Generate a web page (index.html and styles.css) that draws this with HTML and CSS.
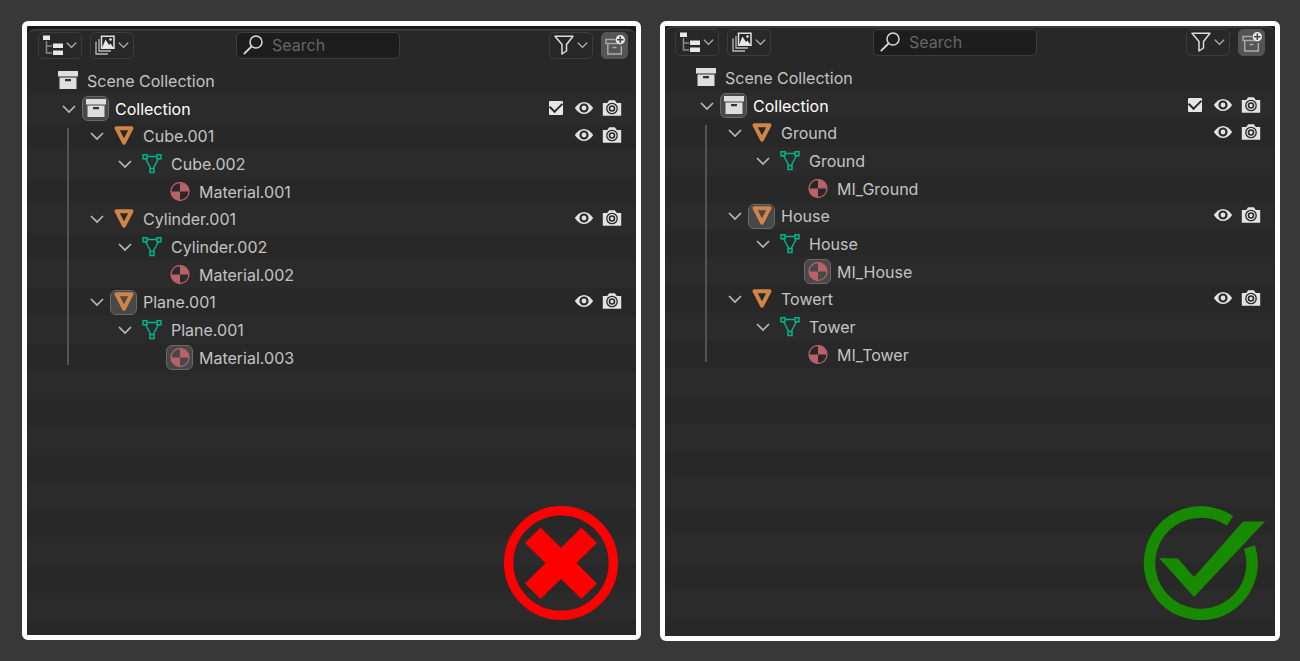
FILE: index.html
```
<!DOCTYPE html>
<html lang="en">
<head>
    <meta charset="utf-8">
    <title>Outliner naming</title>
    <link rel="stylesheet" href="styles.css">
</head>
<body>
    <svg class="sprite" aria-hidden="true">
        <symbol id="i-arrow" viewBox="0 0 14 20"><path d="M1 7l6 6 6-6" fill="none" stroke="#b8b8b8" stroke-width="1.700"/></symbol>
        <symbol id="i-box" viewBox="0 0 20 20"><path fill="#dedede" d="M0 0h20v5.500H0zM1.500 6.500h17V18h-17z"/><path fill="#333" d="M7 8h6v2.300H7z"/></symbol>
        <symbol id="i-object" viewBox="0 0 20 20"><path d="M2.500 2.200h15L10 16.700z" fill="none" stroke="#cf8549" stroke-width="4" stroke-linejoin="round"/></symbol>
        <symbol id="i-mesh" viewBox="0 0 20 20"><g fill="none" stroke="#00b48b" stroke-width="1.500"><path d="M5 2.500h10M3.500 4.500 8.500 14M16.500 4.500l-5 9.500"/><path d="M1 .8h4v4H1zM15 .8h4v4h-4zM8 14.500h4v4H8z"/></g></symbol>
        <symbol id="i-material" viewBox="0 0 20 20"><circle cx="10" cy="9.500" r="9" fill="none" stroke="#b9606a" stroke-width="1.300"/><path fill="#b9606a" d="M10 .5a9 9 0 0 1 9 9h-9zM10 18.500a9 9 0 0 1-9-9h9z"/></symbol>
        <symbol id="i-eye" viewBox="0 0 20 20"><path fill="#e2e2e2" d="M.8 9Q5 3 10 3t9.200 6q-4.200 6-9.200 6T.8 9z"/><circle cx="10" cy="9" r="3.500" fill="#e2e2e2" stroke="#2a2a2a" stroke-width="2.200"/></symbol>
        <symbol id="i-camera" viewBox="0 0 20 20"><path fill="#e2e2e2" d="M.8 4h4.400l2-2.800h5.600l2 2.800h4.400v12.800H.8z"/><circle cx="10" cy="9.500" r="5.200" fill="none" stroke="#2a2a2a" stroke-width="1.300"/><circle cx="10" cy="9.500" r="2.500" fill="none" stroke="#2a2a2a" stroke-width="1.600"/></symbol>
        <symbol id="i-tree" viewBox="0 0 20 20"><path fill="#e8e8e8" d="M0 .5h7V5H0zM10 8.500h10V13H10zM10 15.500h10V20H10z"/><path d="M3.500 6v12H9M3.500 11H9" fill="none" stroke="#8a8a8a" stroke-width="1.500"/></symbol>
        <symbol id="i-image" viewBox="0 0 20 20"><path fill="none" stroke="#e0e0e0" stroke-width="1.500" d="M6.500 1.200h12.500v12H6.500z"/><path fill="#e8e8e8" d="M7 13l3.500-8.500L14 10l1.500-1.500 3 4.500z"/><circle cx="15.500" cy="4.500" r="1.300" fill="#e8e8e8"/><path d="M4 4v12h12M1 6.500V19h12" fill="none" stroke="#bababa" stroke-width="1.300"/></symbol>
        <symbol id="i-search" viewBox="0 0 20 20"><circle cx="13" cy="7" r="6" fill="none" stroke="#d8d8d8" stroke-width="1.500"/><path d="M8.500 11.500.8 19.200" stroke="#d8d8d8" stroke-width="1.800"/></symbol>
        <symbol id="i-filter" viewBox="0 0 20 20"><path d="M1 1.200h18L12.500 9.500v6.500L8 19V9.500z" fill="none" stroke="#dcdcdc" stroke-width="1.500" stroke-linejoin="round"/></symbol>
        <symbol id="i-new" viewBox="0 0 20 20"><path d="M10 4.500H1v4h13M2.800 8.500V19h13.500v-8M7.500 12.500h4" fill="none" stroke="#a8a8a8" stroke-width="1.500"/><circle cx="15.300" cy="4.700" r="4.700" fill="#e8e8e8"/><path d="M15.300 1.500v6.400M12.100 4.700h6.400" stroke="#444" stroke-width="1.500"/></symbol>
    </svg>

    <main class="compare">
        <section class="panel panel-bad">
            <div class="editor">
                <header class="toolbar">
                    <button class="tool" aria-label="Editor type"><svg class="icon"><use href="#i-tree"/></svg><svg class="arrow"><use href="#i-arrow"/></svg></button>
                    <button class="tool" aria-label="Display mode"><svg class="icon"><use href="#i-image"/></svg><svg class="arrow"><use href="#i-arrow"/></svg></button>
                    <label class="search"><svg class="icon"><use href="#i-search"/></svg><input type="text" placeholder="Search" aria-label="Search"></label>
                    <button class="tool" aria-label="Filter"><svg class="icon"><use href="#i-filter"/></svg><svg class="arrow"><use href="#i-arrow"/></svg></button>
                    <button class="tool tool-new" aria-label="New collection"><svg class="icon"><use href="#i-new"/></svg></button>
                </header>
                <div class="tree" data-items="Cube.001,Cube.002,Material.001;Cylinder.001,Cylinder.002,Material.002;Plane.001*,Plane.001,Material.003*"></div>
            </div>
            <svg class="mark" viewBox="0 0 114 114" role="img" aria-label="Wrong">
                <circle cx="57" cy="57" r="52.300" fill="none" stroke="#f00" stroke-width="9.400"/>
                <path fill="#f00" d="M36.500 21.500 57 42l20.500-20.500L93 37 72.500 57 93 77.500 77.500 93 57 73 36.500 93 21 77.500 41.500 57 21 37z"/>
            </svg>
        </section>

        <section class="panel panel-good">
            <div class="editor">
                <header class="toolbar">
                    <button class="tool" aria-label="Editor type"><svg class="icon"><use href="#i-tree"/></svg><svg class="arrow"><use href="#i-arrow"/></svg></button>
                    <button class="tool" aria-label="Display mode"><svg class="icon"><use href="#i-image"/></svg><svg class="arrow"><use href="#i-arrow"/></svg></button>
                    <label class="search"><svg class="icon"><use href="#i-search"/></svg><input type="text" placeholder="Search" aria-label="Search"></label>
                    <button class="tool" aria-label="Filter"><svg class="icon"><use href="#i-filter"/></svg><svg class="arrow"><use href="#i-arrow"/></svg></button>
                    <button class="tool tool-new" aria-label="New collection"><svg class="icon"><use href="#i-new"/></svg></button>
                </header>
                <div class="tree" data-items="Ground,Ground,MI_Ground;House*,House,MI_House*;Towert,Tower,MI_Tower"></div>
            </div>
            <svg class="mark" viewBox="0 0 122 114" role="img" aria-label="Right">
                <path fill="none" stroke="#188a00" stroke-width="11.500" d="M87 15A51.300 51.300 0 1 0 106.500 41"/>
                <path fill="#188a00" d="M16 52l19 .5L51 71 100 15.500h22L51 91z"/>
            </svg>
        </section>
    </main>

    <script>
        function icon(name, selected) {
            return `<span class="badge${selected ? ' selected' : ''}"><svg class="icon"><use href="#i-${name}"/></svg></span>`;
        }

        function toggles() {
            return `<button class="toggle" aria-label="Hide in viewport"><svg class="icon"><use href="#i-eye"/></svg></button>
                <button class="toggle" aria-label="Disable in renders"><svg class="icon"><use href="#i-camera"/></svg></button>`;
        }

        const arrow = '<button class="fold" aria-label="Collapse"><svg class="arrow"><use href="#i-arrow"/></svg></button>';
        const kinds = ['object', 'mesh', 'material'];

        document.querySelectorAll('.tree').forEach((tree) => {
            let rows = `<div class="row scene">${icon('box')}<span class="name">Scene Collection</span></div>
                <div class="row level-0 active">${arrow}${icon('box', true)}<span class="name">Collection</span>
                <input type="checkbox" class="check" aria-label="Enable collection" checked>${toggles()}</div>`;
            tree.dataset.items.split(';').forEach((group) => {
                group.split(',').forEach((item, i) => {
                    const selected = item.endsWith('*');
                    rows += `<div class="row level-${i + 1}">${i < 2 ? arrow : ''}${icon(kinds[i], selected)}
                        <span class="name">${item.replace('*', '')}</span>${i === 0 ? toggles() : ''}</div>`;
                });
            });
            tree.innerHTML = rows + '<div class="guide"></div>';
        });
    </script>
</body>
</html>
```
FILE: styles.css
```
* {
    box-sizing: border-box;
}

body {
    margin: 0;
    background-color: #383838;
    color: #c3c3c3;
    font-family: Inter, sans-serif;
    font-size: 16px;
}

.sprite {
    display: none;
}

.compare {
    display: grid;
    grid-template-columns: 619fr 620fr;
    gap: 19px;
    height: 100vh;
    padding: 21px 20px 20px 22px;
}

.panel {
    position: relative;
    display: flex;
    min-height: 0;
    border: 5px solid #fff;
    border-radius: 6px;
    background-color: #1a1a1a;
    overflow: hidden;
}

.panel-bad {
    margin-bottom: 1px;
    padding-top: 3px;
}

.editor {
    flex: 1;
    min-width: 0;
    border-top: 2px solid #3a3a3a;
    border-radius: 8px 8px 0 0;
    background-color: #282828;
    overflow: hidden;
}

.toolbar {
    display: flex;
    align-items: center;
    gap: 8px;
    height: 36px;
    padding: 0 8px 8px 11px;
}

.panel-good .toolbar {
    padding: 0 10px 8px 10px;
}

button {
    padding: 0;
    border: none;
    background: none;
}

.icon {
    display: block;
    width: 20px;
    height: 20px;
    flex: none;
}

.arrow {
    display: block;
    width: 14px;
    height: 20px;
}

.tool {
    display: flex;
    align-items: center;
    justify-content: center;
    gap: 3px;
    width: 44px;
    height: 27px;
    border: 1px solid #3d3d3d;
    border-radius: 5px;
}

.tool .arrow {
    width: 11px;
}

.tool-new {
    width: 27px;
    border-color: #545454;
    background-color: #545454;
}

.search {
    display: flex;
    align-items: center;
    gap: 9px;
    width: 164px;
    height: 27px;
    margin: 0 auto 0 94px;
    padding: 0 6px;
    border: 1px solid #3d3d3d;
    border-radius: 5px;
    background-color: #1d1d1d;
}

.search input {
    width: 100%;
    min-width: 0;
    padding: 0;
    border: none;
    outline: none;
    background: none;
    color: #c3c3c3;
    font: inherit;
}

.search input::placeholder {
    color: #666;
}

/* 22 equal rows, striped in pairs */
.tree {
    position: relative;
    display: grid;
    grid-template-rows: repeat(22, 1fr);
    height: 609px;
    background-image: linear-gradient(#282828 50%, #2b2b2b 50%);
    background-size: 100% calc(100% / 11);
}

.row {
    display: flex;
    align-items: center;
    min-height: 0;
    padding-right: 14px;
}

.scene,
.level-0 {
    padding-left: 27px;
}

.level-1 {
    padding-left: 55px;
}

.level-2 {
    padding-left: 83px;
}

.level-3 {
    padding-left: 139px;
}

.fold {
    width: 28px;
    padding-left: 8px;
}

.badge {
    display: flex;
    align-items: center;
    justify-content: center;
    width: 27px;
    height: 25px;
    border: 1px solid transparent;
    border-radius: 6px;
}

.selected {
    border-color: #696969;
    background-color: #484848;
}

.name {
    flex: 1;
    padding-left: 6px;
    line-height: 20px;
}

.active .name {
    color: #fff;
}

.toggle {
    margin-left: 8px;
}

.check {
    appearance: none;
    display: grid;
    place-items: center;
    width: 14px;
    height: 14px;
    margin: 0 3px 2px 0;
    border-radius: 1px;
    background-color: #e6e6e6;
}

.check:checked::before {
    content: "";
    width: 10px;
    height: 6px;
    margin-bottom: 3px;
    border: solid #282828;
    border-width: 0 0 2px 2px;
    rotate: -45deg;
}

.guide {
    position: absolute;
    top: 61px;
    left: 40px;
    width: 2px;
    height: 237px;
    background-color: #545454;
}

.mark {
    position: absolute;
    right: 18px;
    bottom: 15px;
    height: 114px;
}

.panel-good .mark {
    right: 10px;
    bottom: 16px;
}
```
